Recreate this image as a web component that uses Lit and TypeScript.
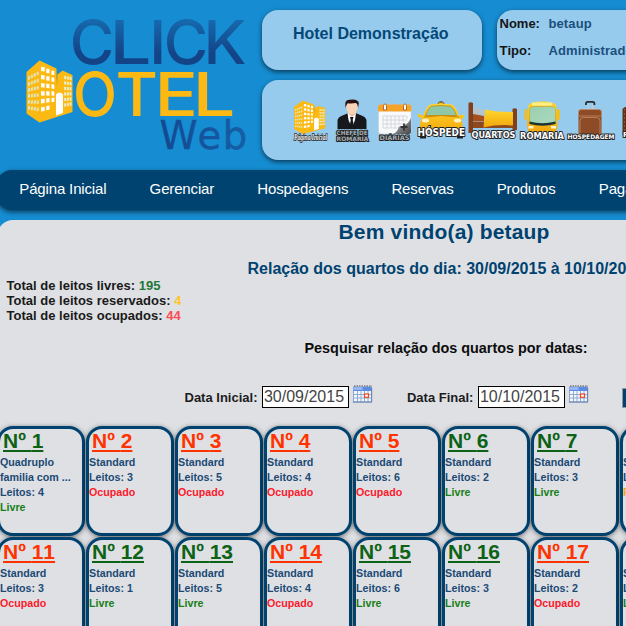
import { LitElement, html, css, svg } from "lit";
import { customElement, property } from "lit/decorators.js";
import { classMap } from "lit/directives/class-map.js";

type Status = "Livre" | "Ocupado" | "Reservado";

interface Room {
  number: number;
  kind: string;
  beds: number;
  status: Status;
}

const room = (number: number, beds: number, status: Status, kind = "Standard"): Room => ({ number, kind, beds, status });

const ROOMS: Room[][] = [
  [
    room(1, 4, "Livre", "Quadruplo familia com ..."),
    room(2, 3, "Ocupado"),
    room(3, 5, "Ocupado"),
    room(4, 4, "Ocupado"),
    room(5, 6, "Ocupado"),
    room(6, 2, "Livre"),
    room(7, 3, "Livre"),
    room(8, 4, "Reservado"),
  ],
  [
    room(11, 3, "Ocupado"),
    room(12, 1, "Livre"),
    room(13, 5, "Livre"),
    room(14, 4, "Ocupado"),
    room(15, 6, "Livre"),
    room(16, 3, "Livre"),
    room(17, 2, "Ocupado"),
    room(18, 4, "Livre"),
  ],
];

const MENU = ["Página Inicial", "Gerenciar", "Hospedagens", "Reservas", "Produtos", "Pagamentos"];

/* Rows of slanted windows for the three faces of the hotel building. */
const windows = () => {
  const out = [];
  for (let r = 0; r < 6; r++) {
    for (let c = 0; c < 4; c++) {
      const x = 1.5 + c * 2.9;
      const y = 15.5 - c * 1.5 + r * (6 + c * 0.4);
      out.push(svg`<path fill="#dfe5b8" d="M${x} ${y + 0.6}l2-.8v3.500l-2 .6z"/>`);
    }
    for (let c = 0; c < 3; c++) {
      const x = 14.6 + c * 5.2;
      const y = 6.2 + c * 1.8 + r * (8.1 - c * 0.6);
      if (r === 5 && c === 2) continue;
      out.push(svg`<path fill="#fff" d="M${x} ${y}l${3.6 - c * 0.4} ${r < 4 ? 0.6 : -0.4}v4.200l-${3.6 - c * 0.4} ${r < 4 ? -0.4 : 0.5}z"/>`);
    }
  }
  for (let r = 0; r < 6; r++) {
    for (let c = 0; c < 3; c++) {
      out.push(svg`<path fill="#e9ecc4" d="M${37.6 + c * 2.7} ${15.2 + c * 0.5 + r * (5.5 - c * 0.2)}l2 .4v3.200l-2-.3z"/>`);
    }
  }
  return out;
};

const building = () => svg`
  <path fill="#fdb913" d="M0 11.500L13 0l17 8v13l1-7 5-4 10 4.500v37L13 62 0 53z"/>
  <path fill="#d9a514" d="M30 9l1.500 9-1.500 9z"/>
  ${windows()}
  <path fill="#fff" d="M29.500 55V34q3.500-4 7 0v18.500z"/>`;

/* One wordmark letter: glyph, x, drawn advance. */
type Letter = [string, number, number];
const CLICK: Letter[] = [["C", 69.8, 44.5], ["L", 109.500, 42], ["I", 149, 17.5], ["C", 163.800, 44.5], ["K", 203.500, 43]];
const OTEL: Letter[] = [["O", 73, 44], ["T", 115.500, 42.5], ["E", 154.500, 43.5], ["L", 192.500, 43]];

@customElement("hotel-logo")
class HotelLogo extends LitElement {
  static styles = css`
    :host { display: block; }
    svg { display: block; }
    .big { font-family: Inter, sans-serif; font-size: 60.500px; font-weight: 500; }
    .web { font-family: "DejaVu Sans", sans-serif; font-size: 38.500px; stroke: #14509a; stroke-width: 0.4px; }
  `;
  private word(letters: Letter[], y: number, fill: string) {
    return letters.map(
      ([ch, x, w]) => svg`<text class="big" x=${x} y=${y} textLength=${w} lengthAdjust="spacingAndGlyphs" fill=${fill}>${ch}</text>`
    );
  }
  render() {
    return html`<svg width="260" height="160" viewBox="0 0 260 160">
      <defs>
        <linearGradient id="navy" x1="0" y1="20" x2="0" y2="64" gradientUnits="userSpaceOnUse">
          <stop offset="0" stop-color="#1669ad" />
          <stop offset=".75" stop-color="#144488" />
        </linearGradient>
        <linearGradient id="web" x1="160" y1="0" x2="247" y2="0" gradientUnits="userSpaceOnUse">
          <stop offset="0" stop-color="#14488f" />
          <stop offset="1" stop-color="#1660a7" />
        </linearGradient>
      </defs>
      ${this.word(CLICK, 64, "url(#navy)")}
      ${this.word(OTEL, 115.600, "#fdb913")}
      <text class="web" y="149.200" x="159.500 197.500 222.800" fill="url(#web)">Web</text>
      <g transform="translate(26.500 60.500)">${building()}</g>
    </svg>`;
  }
}

@customElement("shortcut-bar")
class ShortcutBar extends LitElement {
  static styles = css`
    :host { display: block; }
    svg { display: block; }
    text { font-family: "DejaVu Sans", sans-serif; font-weight: bold; fill: #fff; stroke: #222; stroke-width: 2px; paint-order: stroke; stroke-linejoin: round; }
    .script { font-family: "Liberation Serif", serif; font-style: italic; stroke-width: 1.500px; }
    .dim { fill: #a5adb2; }
  `;
  render() {
    return html`<svg width="364" height="80" viewBox="262 80 364 80">
      <defs>
        <linearGradient id="gold" x1="0" y1="0" x2="0" y2="1">
          <stop offset="0" stop-color="#ffd62c" /><stop offset="1" stop-color="#f2a70c" />
        </linearGradient>
        <linearGradient id="glass" x1="0" y1="0" x2="1" y2="1">
          <stop offset="0" stop-color="#9bcfae" /><stop offset="1" stop-color="#a9d9bf" />
        </linearGradient>
        <linearGradient id="curl" x1="0" y1="0" x2="1" y2="1">
          <stop offset=".3" stop-color="#e4e6e7" /><stop offset=".55" stop-color="#777b7e" /><stop offset="1" stop-color="#444" />
        </linearGradient>
      </defs>

      <g transform="translate(294 100.500) scale(.68 .54)">${building()}</g>
      <text class="script" x="294" y="139.500" font-size="8" textLength="33" lengthAdjust="spacingAndGlyphs">Página Inicial</text>

      <path fill="#17181d" d="M337.500 129v-8q0-4 5-5.500l6-2.500h7l6 2.500q5 1.500 5 5.500v8z" />
      <path fill="#fff" d="M347.500 113h8.500l-1 7-3 8-3.500-8z" />
      <path fill="#15161a" d="M350 117h3.500l-.8 3 1.300 6-2.200 3-2.200-3 1.200-6z" />
      <path fill="#eebb9c" d="M348.500 110h7v4l-3.500 3-3.500-3z" />
      <ellipse cx="352" cy="107" rx="5.700" ry="7.300" fill="#f8d3b8" />
      <path fill="#2a1310" d="M345.600 108q-1.800-8.300 3.900-8.300 8.500-1.200 9.300 3.300l-.7 5q-.4-4.300-2.400-5-4 .8-8 .2-1.800 1.800-2.100 4.800z" />
      <text class="dim" x="336.500" y="134.500" font-size="6" textLength="31" lengthAdjust="spacingAndGlyphs">CHEFE DE</text>
      <text class="dim" x="336.500" y="140.700" font-size="6" textLength="32" lengthAdjust="spacingAndGlyphs">ROMARIA</text>

      <rect x="378.500" y="105" width="32.500" height="29" rx="2.500" fill="#f8f9fa" stroke="#cdd3d6" stroke-width=".7" />
      <path fill="#f5a32b" d="M378 111.500v-4q0-3 3-3h27.500q3 0 3 3v4z" />
      <g fill="none" stroke="#ccd1d6" stroke-width=".8">
        <path d="M383 116h24M383 120h24M383 124h23M383 128h14M383 116v12M387 116v12M391 116v12M395 116v12M399 116v8M403 116v6M407 116v3" />
      </g>
      <path fill="#fff" stroke="#b46c22" stroke-width="1" d="M383.500 110v-4.500q0-1.500 1.500-1.500t1.500 1.500v4.500zM403.500 110v-4.500q0-1.500 1.500-1.500t1.500 1.500v4.500z" />
      <path fill="url(#curl)" d="M393 134q5-2 5.500-7.500 9 0 12.500-8.500v14q0 2-2 2z" />
      <path stroke="#333" stroke-width="1.800" d="M404 123.500v7M400.500 127h7" />
      <text x="379.500" y="140.300" font-size="6.300" class="dim" textLength="30" lengthAdjust="spacingAndGlyphs">DIÁRIAS</text>

      <path fill="#45413a" d="M437 105l1.500-3q2.500-1.500 5 0l1.500 3z" />
      <path fill="#efb719" d="M438.500 102.500h5v2h-5z" />
      <path fill="url(#gold)" d="M423 116q4-11 7.500-11.500 10.500-1.600 21 0 4 .5 7.500 11.500l3.500-1.500q3 .5 1 3.500l-2 1 1 5v10h-6v-3h-31v3h-5.500v-11l1.500-5-3.500-1q-1-3 1.500-3.500z" />
      <path fill="#8fc8a8" stroke="#c9860b" stroke-width=".8" d="M425.500 115.500q3-8.500 6-9.300 9.500-1.300 19 0 3 .8 6 9.300z" />
      <path fill="none" stroke="#c68509" d="M424 117q17-3 35 0" />
      <ellipse cx="425.500" cy="120.500" rx="3.600" ry="2" fill="#fff4c2" />
      <ellipse cx="457.500" cy="120.500" rx="3.600" ry="2" fill="#fff4c2" />
      <path fill="#222" d="M420 131h6v7.500h-6zM457 131h6v7.500h-6z" />
      <text x="417.500" y="135.800" font-size="10" textLength="47.500" lengthAdjust="spacingAndGlyphs">HÓSPEDE</text>

      <path fill="#823f1a" d="M468.500 103q2.300-1.600 4.500 0v30h-4.500zM512.500 109q2.300-1.600 4.500 0v21h-4.500z" />
      <path fill="#8c481f" d="M473 122h40v6h-40z" />
      <path fill="#b7c3cc" d="M473.500 108.500q6-1.500 10 2.500v4.500l-10-1z" />
      <path fill="#a84f20" d="M473 114l11 2v5.500h-11z" />
      <path fill="url(#gold)" d="M485 109.500q14 3 28 2.500v13.500q-15-1.500-29.500 2z" />
      <text x="471.500" y="138" font-size="9" textLength="44" lengthAdjust="spacingAndGlyphs">QUARTOS</text>

      <path fill="url(#gold)" d="M529 132q-3-5-1.500-13l.8-13q1-4.500 14-4.500t14 4.500l.8 13q1.500 8-1.500 13z" />
      <rect x="524.500" y="109" width="3" height="11" rx="1.400" fill="#f5bd15" />
      <rect x="556.800" y="109" width="3" height="11" rx="1.400" fill="#f5bd15" />
      <rect x="532" y="102.500" width="20" height="3" rx="1" fill="#fff18a" />
      <path fill="url(#glass)" stroke="#caa21b" stroke-width=".6" d="M529.500 108.500q1-2 4-2h18q3 0 4 2v14q-13 4-26 0z" />
      <path fill="#1d3434" d="M529.500 121.500q12.500 3.500 26 0v2.500q-13 3.500-26 0z" />
      <path fill="#fff6cd" d="M528.500 126h5v2.500h-5zM551 126h5v2.500h-5z" />
      <text x="520" y="139" font-size="9" textLength="44" lengthAdjust="spacingAndGlyphs">ROMARIA</text>

      <path fill="none" stroke="#292a2c" stroke-width="1.800" d="M586 105v-1.500q0-1.700 1.700-1.700h5q1.700 0 1.700 1.700v1.500" />
      <path fill="none" stroke="#c6ccd0" stroke-width="1" d="M588 104v6M592.500 104v6" />
      <rect x="578.500" y="109.500" width="23" height="26" rx="2.500" fill="#8e4b27" />
      <path fill="none" stroke="#c48c60" stroke-width=".8" d="M578.500 115v-3q0-2.500 2.500-2.500h18q2.500 0 2.500 2.500v3M580 135v-14q0-3.500 3.500-3.500h13q3.500 0 3.500 3.500v14M578.500 116h23" />
      <text x="567.500" y="138.500" font-size="6.200" textLength="47" lengthAdjust="spacingAndGlyphs">HOSPEDAGEM</text>

      <path fill="#55351d" d="M622.500 109q1.500-2 4-2v28h-4z" />
      <path fill="none" stroke="#bd3d34" stroke-dasharray="2 2" d="M624.500 109v26" />
      <text x="623" y="137" font-size="7">R</text>
    </svg>`;
  }
}

@customElement("date-field")
class DateField extends LitElement {
  @property() label = "";
  @property() value = "";
  static styles = css`
    :host { display: flex; flex: none; align-items: flex-start; font: bold 13px/15px "Liberation Sans", Arial, sans-serif; color: #1c1c1c; }
    .label { margin: 5px 4.500px 0 0; white-space: nowrap; }
    .box { box-sizing: border-box; width: 87.500px; height: 22px; margin-top: 1px; padding-left: 1px; border: 1px solid #000; background: #fff; font-size: 16px; line-height: 19px; font-weight: normal; color: #444; }
    svg { display: block; margin-left: 4px; }
  `;
  render() {
    return html`<span class="label">${this.label}</span><span class="box">${this.value}</span>
      <svg width="20" height="18" viewBox="0 0 20 18">
        <rect x=".5" y="2" width="18" height="15" fill="#f3f7fd" stroke="#7896c4" stroke-width=".8" />
        <path fill="#5c8be6" d="M.5 2h18v4H.500z" />
        <path fill="#94b7f3" d="M.5 2h9v3H.500z" />
        <path stroke="#555" stroke-width="1" stroke-dasharray="1.500 1" d="M1 1h18" />
        <path fill="none" stroke="#86a3ce" stroke-width=".9" d="M1 9.500h18M1 13h18M4.500 6v11M8 6v11M11.500 6v11M15 6v11" />
        <rect x="11.500" y="9" width="4" height="3.300" fill="#fff" stroke="#ed4524" stroke-width="1.200" />
        <path stroke="#6481ad" d="M0 17h19M18.700 3v14" />
      </svg>`;
  }
}

@customElement("room-card")
class RoomCard extends LitElement {
  @property({ attribute: false }) room!: Room;
  static styles = css`
    :host { display: block; box-sizing: border-box; width: 88px; height: 110px; border: 3px solid #004370; border-radius: 16px; box-shadow: 0 1px 5px rgba(0, 0, 0, 0.5); background: #dfe0e4; font: bold 10.700px/15px "Liberation Sans", Arial, sans-serif; color: #1b4a74; }
    .number { margin: 0 0 2px 3px; font-size: 21px; line-height: 24px; color: #0d6216; text-decoration: underline; text-decoration-thickness: 2px; text-underline-offset: 2px; white-space: nowrap; font-kerning: none; }
    .number.taken { color: #ff3300; }
    .kind { width: 78px; }
    .livre { color: #178017; }
    .ocupado { color: #fb1a2b; }
    .reservado { color: #f9a21b; }
  `;
  render() {
    const r = this.room;
    return html`
      <div class=${classMap({ number: true, taken: r.status !== "Livre" })}>Nº ${r.number}</div>
      <div class="kind">${r.kind}</div>
      <div>Leitos: ${r.beds}</div>
      <div class=${r.status.toLowerCase()}>${r.status}</div>`;
  }
}

@customElement("app-root")
class AppRoot extends LitElement {
  static styles = css`
    :host { display: block; width: 626px; height: 626px; overflow: hidden; background: #168dd2; font-family: "Liberation Sans", Arial, sans-serif; }
    .header { display: grid; grid-template-columns: 262px 219.500px 1fr; grid-template-rows: 60px 80px; row-gap: 10px; height: 160px; padding-top: 10px; box-sizing: border-box; }
    hotel-logo { grid-row: 1 / 3; margin-top: -10px; }
    .panel { border-radius: 16px; background: #97cbee; box-shadow: 0 2px 5px rgba(0, 0, 0, 0.6); }
    .hotel { text-align: center; font-weight: bold; font-size: 16px; line-height: 18px; padding: 15px 2px 0 0; box-sizing: border-box; color: #044877; }
    .user { width: 260px; margin-left: 15px; display: grid; grid-template-columns: 49px 1fr; grid-auto-rows: 27px; padding-left: 3px; box-sizing: border-box; font: bold 13px/27px "Liberation Sans", Arial, sans-serif; font-kerning: none; color: #1b507c; }
    .user b { color: #151515; }
    .user span { letter-spacing: 0.1px; }
    .shortcuts { grid-column: 2 / 4; width: 420px; }
    .menu { display: flex; gap: 43.200px; width: 700px; height: 40px; margin: 10px 0 0 -4px; padding-left: 23.300px; box-sizing: border-box; border-radius: 16px; background: #004370; box-shadow: 0 2px 5px rgba(0, 0, 0, 0.6); color: #fff; font-size: 15px; letter-spacing: -0.150px; font-kerning: none; line-height: 38px; white-space: nowrap; }
    .content { width: 900px; height: 450px; margin: 10px 0 0 -3px; border-radius: 16px; background: #dfe0e4; display: flex; flex-direction: column; }
    .content > * { flex: none; }
    h1, h2, h3 { margin: 0; white-space: nowrap; }
    h1 { padding-left: 341.500px; font-size: 21px; line-height: 24px; letter-spacing: 0.180px; color: #004370; }
    h2 { padding-left: 250.500px; margin-top: 15px; font-size: 16px; line-height: 19px; color: #004370; }
    .totals { padding-left: 9.500px; font: bold 13px/15px "Liberation Sans", Arial, sans-serif; letter-spacing: 0.010px; color: #1a1a1a; }
    .free { color: #1f7838; }
    .held { color: #ffc425; }
    .busy { color: #fb4b55; }
    h3 { padding-left: 307.500px; margin-top: 17px; font-size: 14.400px; line-height: 17px; color: #0c0c0c; }
    .search { display: flex; padding-left: 187.500px; margin-top: 28px; height: 41px; }
    .search date-field + date-field { margin-left: 33.500px; }
    .go { width: 60px; height: 20px; margin: 3px 0 0 33px; box-sizing: border-box; border: 1px solid #8d969d; background: #004370; }
    .rooms { display: grid; grid-template-columns: repeat(8, 88px); gap: 1px; }
  `;
  render() {
    return html`
      <div class="header">
        <hotel-logo></hotel-logo>
        <div class="panel hotel">Hotel Demonstração</div>
        <div class="panel user"><b>Nome:</b><span>betaup</span><b>Tipo:</b><span>Administrador</span></div>
        <div class="panel shortcuts"><shortcut-bar></shortcut-bar></div>
      </div>
      <nav class="menu">${MENU.map((m) => html`<span>${m}</span>`)}</nav>
      <main class="content">
        <h1>Bem vindo(a) betaup</h1>
        <h2>Relação dos quartos do dia: 30/09/2015 à 10/10/2015</h2>
        <div class="totals">
          <div>Total de leitos livres: <span class="free">195</span></div>
          <div>Total de leitos reservados: <span class="held">4</span></div>
          <div>Total de leitos ocupados: <span class="busy">44</span></div>
        </div>
        <h3>Pesquisar relação dos quartos por datas:</h3>
        <div class="search">
          <date-field label="Data Inicial:" value="30/09/2015"></date-field>
          <date-field label="Data Final:" value="10/10/2015"></date-field>
          <div class="go"></div>
        </div>
        <div class="rooms">${ROOMS.flat().map((r) => html`<room-card .room=${r}></room-card>`)}</div>
      </main>`;
  }
}
